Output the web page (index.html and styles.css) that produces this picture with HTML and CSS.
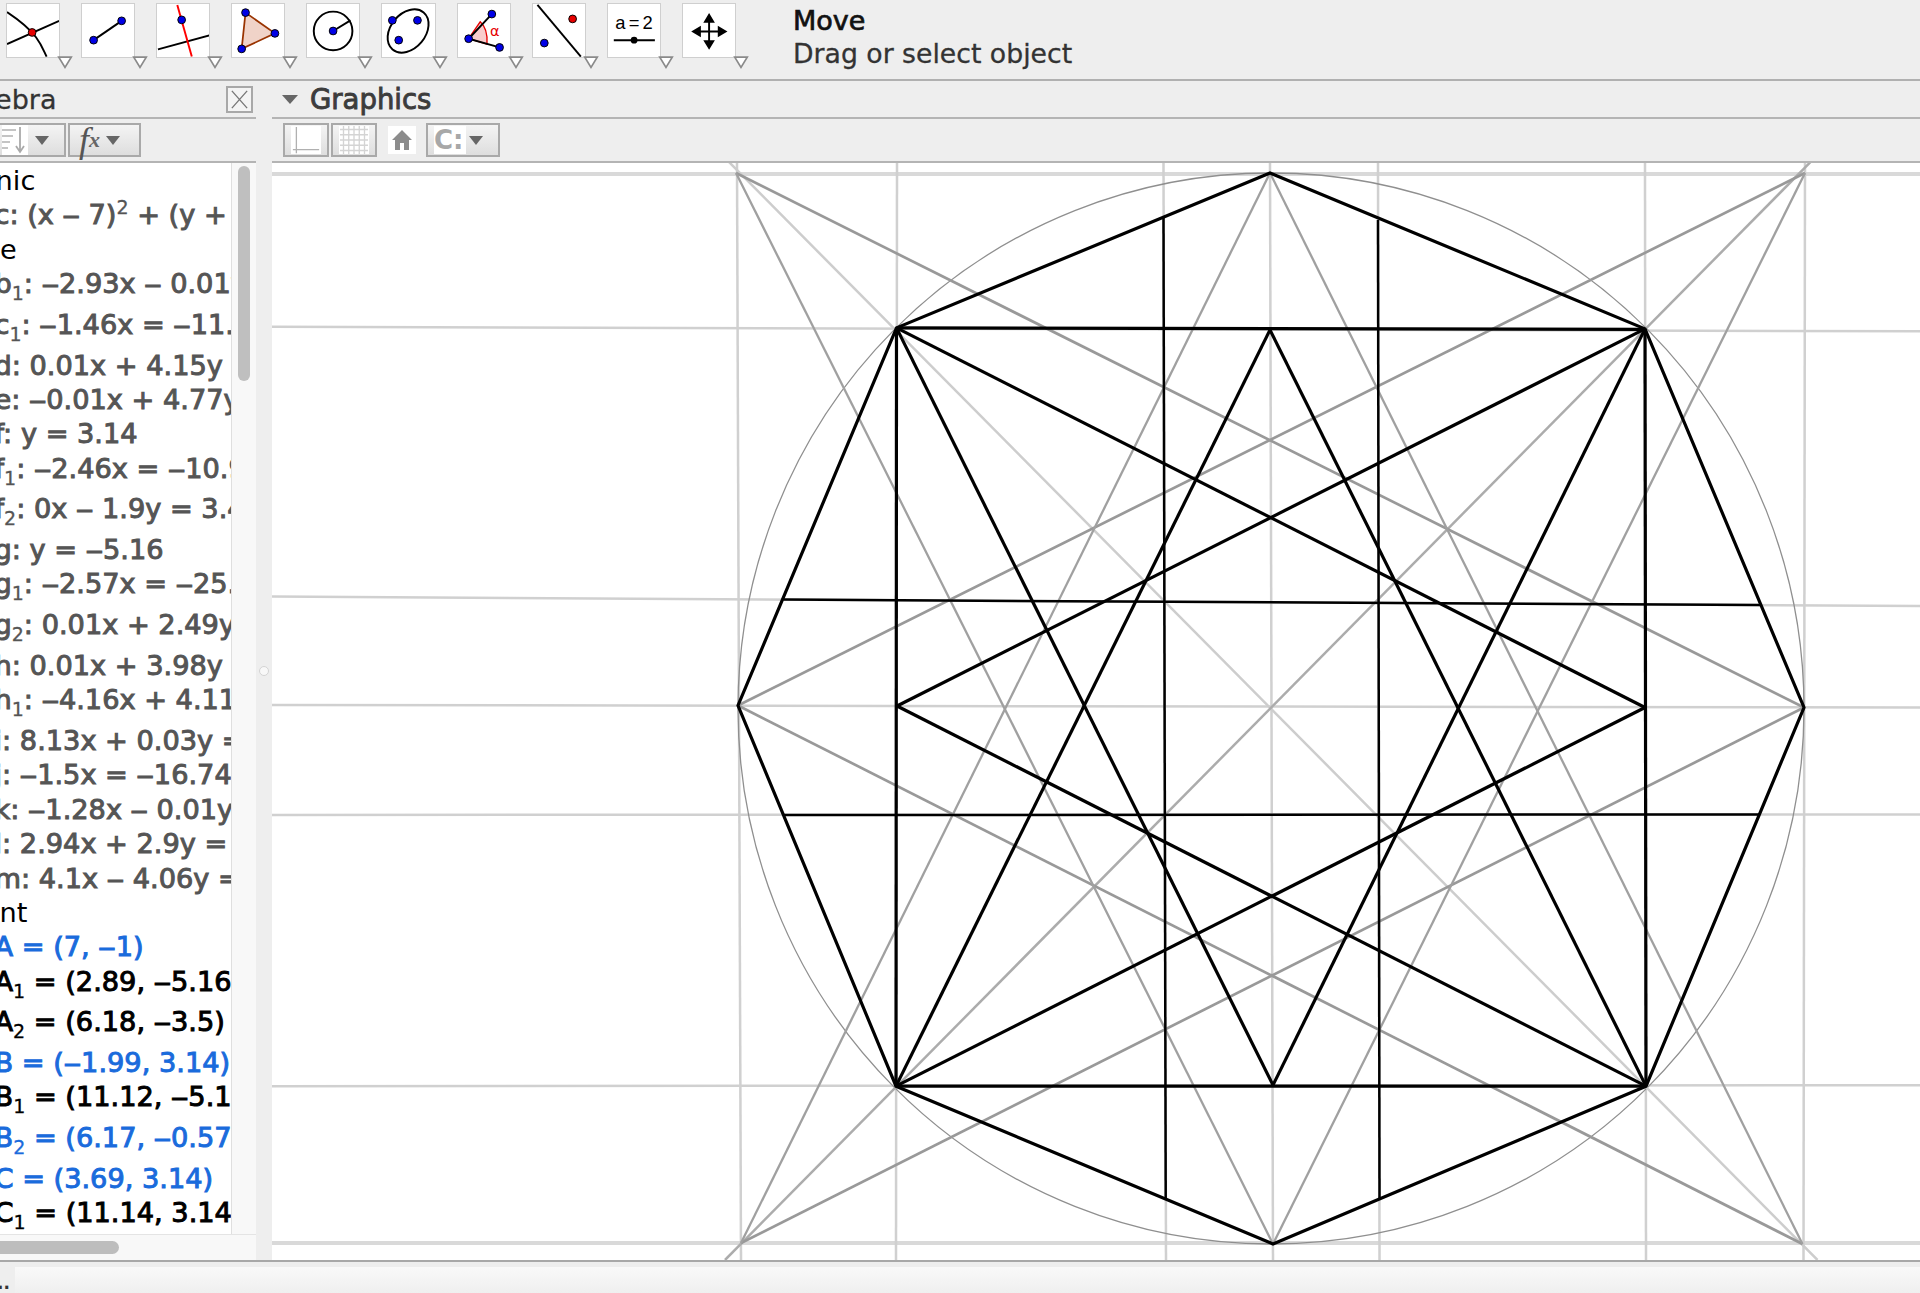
FILE: index.html
```html
<!DOCTYPE html>
<html lang="en">
<head>
<meta charset="utf-8">
<title>GeoGebra</title>
<link rel="stylesheet" href="styles.css">
</head>
<body>
<header class="toolbar">
  <div class="tools">
    <div class="tool"><svg viewBox="0 0 54 54"><path class="ic" d="M0 8C12 16 24 26 30 34S38 48 41 54"/><path class="ic" d="M0 41L54 17"/><circle class="pr" cx="26" cy="29" r="4"/></svg><svg class="corner" viewBox="0 0 14 11"><path d="M1.500 1H12.500L7 10Z"/></svg></div>
    <div class="tool"><svg viewBox="0 0 54 54"><path class="ic" d="M12 37L41 17"/><circle class="pb" cx="12" cy="37" r="4"/><circle class="pb" cx="41" cy="17" r="4"/></svg><svg class="corner" viewBox="0 0 14 11"><path d="M1.500 1H12.500L7 10Z"/></svg></div>
    <div class="tool"><svg viewBox="0 0 54 54"><path class="ic" d="M1 46.500L54 32"/><path class="ir" d="M21 0.500L36 54"/><circle class="pb" cx="25.500" cy="16" r="4"/></svg><svg class="corner" viewBox="0 0 14 11"><path d="M1.500 1H12.500L7 10Z"/></svg></div>
    <div class="tool"><svg viewBox="0 0 54 54"><path class="poly" d="M14 8.500L44.400 30L10 46Z"/><circle class="pb" cx="14" cy="8.500" r="4"/><circle class="pb" cx="44.400" cy="30" r="4"/><circle class="pb" cx="10" cy="46" r="4"/></svg><svg class="corner" viewBox="0 0 14 11"><path d="M1.500 1H12.500L7 10Z"/></svg></div>
    <div class="tool"><svg viewBox="0 0 54 54"><circle class="ic" cx="27" cy="27.500" r="20"/><path class="ic" d="M27 27.500L45 16.500"/><circle class="pb" cx="27" cy="27.500" r="4"/></svg><svg class="corner" viewBox="0 0 14 11"><path d="M1.500 1H12.500L7 10Z"/></svg></div>
    <div class="tool"><svg viewBox="0 0 54 54"><ellipse class="ic" cx="27" cy="27.500" rx="25" ry="18" transform="rotate(-50 27 27.500)"/><circle class="pb" cx="10.700" cy="16.500" r="4"/><circle class="pb" cx="36.700" cy="16.500" r="4"/><circle class="pb" cx="17.300" cy="37" r="4"/></svg><svg class="corner" viewBox="0 0 14 11"><path d="M1.500 1H12.500L7 10Z"/></svg></div>
    <div class="tool"><svg viewBox="0 0 54 54"><path class="wedge" d="M11 35.500L23 18Q31 25 30 41Z"/><path class="ic" d="M35 10L11 35.500L43 44.500"/><circle class="pb" cx="11" cy="35.500" r="4"/><circle class="pb" cx="35" cy="10" r="4"/><circle class="pb" cx="43" cy="44.500" r="4"/><text class="alpha" x="33" y="33">α</text></svg><svg class="corner" viewBox="0 0 14 11"><path d="M1.500 1H12.500L7 10Z"/></svg></div>
    <div class="tool"><svg viewBox="0 0 54 54"><path class="ic" d="M4.600 0.500L49.500 54"/><circle class="pb" cx="11.700" cy="40" r="4"/><circle class="pr" cx="41" cy="15" r="4"/></svg><svg class="corner" viewBox="0 0 14 11"><path d="M1.500 1H12.500L7 10Z"/></svg></div>
    <div class="tool"><svg viewBox="0 0 54 54"><text class="slider" x="27" y="25">a = 2</text><path class="ic" d="M6 37H48.500"/><circle class="pk" cx="27" cy="37" r="3.500"/></svg><svg class="corner" viewBox="0 0 14 11"><path d="M1.500 1H12.500L7 10Z"/></svg></div>
    <div class="tool"><svg viewBox="0 0 54 54"><path class="ic" d="M27 14V42M13 28H41"/><path class="pk" d="M27 9L33 19H21ZM27 47L33 37H21ZM8.500 28L18.500 22V34ZM46 28L36 22V34Z"/></svg><svg class="corner" viewBox="0 0 14 11"><path d="M1.500 1H12.500L7 10Z"/></svg></div>
  </div>
  <div class="help">
    <div class="help-title">Move</div>
    <div class="help-text">Drag or select object</div>
  </div>
</header>

<main class="main">
  <section class="algebra">
    <div class="phead alg-head">
      <span class="alg-title">Algebra</span>
      <button class="close"><svg viewBox="0 0 22 22"><path d="M3 2L19 20M19 2L3 20"/></svg></button>
    </div>
    <div class="ptools alg-tools">
      <div class="btn sort">
        <svg class="bicon" viewBox="0 0 26 30"><path class="sortl" d="M0 5H14M0 11H11M0 17H8M0 23H6"/><path class="sorta" d="M18 2V26M14 21L18 27L22 21"/></svg>
        <i class="caret"></i>
      </div>
      <div class="btn fx"><span class="fx-f">f</span><span class="fx-x">x</span><i class="caret"></i></div>
    </div>
    <div class="alg-body">
      <div class="list">
        <div class="row sec">Conic</div>
        <div class="row">c: (x ‒ 7)<sup>2</sup> + (y + 1)<sup>2</sup> = 80</div>
        <div class="row sec">Line</div>
        <div class="row s">b<sub>1</sub>: ‒2.93x ‒ 0.01y = 3</div>
        <div class="row s">c<sub>1</sub>: ‒1.46x = ‒11.27</div>
        <div class="row">d: 0.01x + 4.15y = 13</div>
        <div class="row">e: ‒0.01x + 4.77y = 15</div>
        <div class="row">f: y = 3.14</div>
        <div class="row s">f<sub>1</sub>: ‒2.46x = ‒10.93</div>
        <div class="row s">f<sub>2</sub>: 0x ‒ 1.9y = 3.41</div>
        <div class="row">g: y = ‒5.16</div>
        <div class="row s">g<sub>1</sub>: ‒2.57x = ‒25.81</div>
        <div class="row s">g<sub>2</sub>: 0.01x + 2.49y = 8</div>
        <div class="row">h: 0.01x + 3.98y = 4</div>
        <div class="row s">h<sub>1</sub>: ‒4.16x + 4.11y = 9</div>
        <div class="row">i: 8.13x + 0.03y = 56</div>
        <div class="row">j: ‒1.5x = ‒16.74</div>
        <div class="row">k: ‒1.28x ‒ 0.01y = 4</div>
        <div class="row">l: 2.94x + 2.9y = 18</div>
        <div class="row">m: 4.1x ‒ 4.06y = 33</div>
        <div class="row sec">Point</div>
        <div class="row free">A = (7, ‒1)</div>
        <div class="row s dep">A<sub>1</sub> = (2.89, ‒5.16)</div>
        <div class="row s dep">A<sub>2</sub> = (6.18, ‒3.5)</div>
        <div class="row free">B = (‒1.99, 3.14)</div>
        <div class="row s dep">B<sub>1</sub> = (11.12, ‒5.16)</div>
        <div class="row s free">B<sub>2</sub> = (6.17, ‒0.57)</div>
        <div class="row free">C = (3.69, 3.14)</div>
        <div class="row dep">C<sub>1</sub> = (11.14, 3.14)</div>
      </div>
      <div class="vtrack"><div class="vthumb"></div></div>
    </div>
    <div class="htrack"><div class="hthumb"></div></div>
  </section>

  <div class="divider"><i class="dot"></i></div>

  <section class="graphics">
    <div class="phead gfx-head">
      <i class="tri"></i>
      <span class="gfx-title">Graphics</span>
    </div>
    <div class="ptools gfx-tools">
      <div class="btn axes"><svg class="bicon" viewBox="0 0 32 32"><path class="axl" d="M5 1V31M1 27H31"/></svg></div>
      <div class="btn grid"><svg class="bicon" viewBox="0 0 32 32"><path class="gdl" d="M4 0V32M10 0V32M16 0V32M22 0V32M28 0V32M0 4H32M0 10H32M0 16H32M0 22H32M0 28H32"/></svg></div>
      <div class="home"><svg viewBox="0 0 28 28"><path d="M14 4L24 14H21V24H16V17H12V24H7V14H4Z"/></svg></div>
      <div class="btn cap"><span class="cap-c">C:</span><i class="caret"></i></div>
    </div>
    <svg class="canvas" viewBox="272 163 1648 1098" preserveAspectRatio="none">
      <g class="bar">
        <line x1="272" y1="174" x2="1920" y2="174"/>
        <line x1="272" y1="1244" x2="1920" y2="1244"/>
      </g>
      <g class="axis">
        <line x1="737" y1="163" x2="741" y2="1261"/>
        <line x1="897" y1="163" x2="896" y2="1261"/>
        <line x1="1163.500" y1="163" x2="1166" y2="1261"/>
        <line x1="1270" y1="163" x2="1273" y2="1261"/>
        <line x1="1378" y1="163" x2="1379.500" y2="1261"/>
        <line x1="1645" y1="163" x2="1646" y2="1261"/>
        <line x1="1805" y1="163" x2="1803.500" y2="1261"/>
        <line x1="272" y1="327" x2="1920" y2="331.500"/>
        <line x1="272" y1="597" x2="1920" y2="606.500"/>
        <line x1="272" y1="705.500" x2="1920" y2="708"/>
        <line x1="272" y1="815.500" x2="1920" y2="815"/>
        <line x1="272" y1="1087" x2="1920" y2="1086"/>
      </g>
      <ellipse class="circ" cx="1271" cy="709" rx="533" ry="536"/>
      <line class="dl" x1="729" y1="162" x2="1817.500" y2="1261"/>
      <line class="dm" x1="1810.500" y1="162" x2="725" y2="1261"/>
      <g class="gr">
        <line x1="736" y1="173" x2="1804" y2="708"/>
        <line x1="1805" y1="173" x2="738" y2="706"/>
        <line x1="741" y1="1244" x2="1804" y2="708"/>
        <line x1="1802.500" y1="1245" x2="738" y2="706"/>
      </g>
      <g class="gt">
        <line x1="736" y1="173" x2="1273" y2="1245"/>
        <line x1="1805" y1="173" x2="1273" y2="1245"/>
        <line x1="741" y1="1244" x2="1270" y2="173"/>
        <line x1="1802.500" y1="1245" x2="1270" y2="173"/>
      </g>
      <g class="kt">
        <line x1="1163.500" y1="218" x2="1165.700" y2="1199"/>
        <line x1="1378" y1="220" x2="1379.500" y2="1199"/>
        <line x1="783.500" y1="600" x2="1760" y2="605.500"/>
        <line x1="783.500" y1="815.700" x2="1759" y2="815"/>
      </g>
      <g class="k">
        <polygon points="1270,173 1645,329 1804,708 1646,1087 1273,1245 896,1087 738,706 896.500,328"/>
        <line x1="896.500" y1="328" x2="1645" y2="329.500"/>
        <line x1="896" y1="1087" x2="1646" y2="1087"/>
        <line x1="896.500" y1="328" x2="896" y2="1087"/>
        <line x1="1645" y1="329" x2="1646" y2="1087"/>
        <line x1="896.500" y1="328" x2="1645" y2="708"/>
        <line x1="1645" y1="329" x2="897" y2="706.500"/>
        <line x1="896" y1="1087" x2="1645" y2="708"/>
        <line x1="1646" y1="1087" x2="897" y2="706.500"/>
        <line x1="896.500" y1="328" x2="1273" y2="1086"/>
        <line x1="1645" y1="329" x2="1273" y2="1086"/>
        <line x1="1270" y1="330" x2="896" y2="1087"/>
        <line x1="1270" y1="330" x2="1646" y2="1087"/>
      </g>
    </svg>
  </section>
</main>

<footer class="status">
  <span class="dots">...</span>
  <div class="input"></div>
</footer>
</body>
</html>
```
FILE: styles.css
```css
* { box-sizing: border-box; }
html, body { margin: 0; padding: 0; }
body {
  width: 1920px;
  height: 1293px;
  overflow: hidden;
  background: #eeeeee;
  font-family: "DejaVu Sans", sans-serif;
  color: #000;
  display: flex;
  flex-direction: column;
}

/* top toolbar */
.toolbar {
  height: 81px;
  border-bottom: 2px solid #b0b0b0;
  display: flex;
  padding: 3px 0 0 5.500px;
  flex: none;
}
.tools { display: flex; gap: 21px; width: 731.500px; flex: none; }
.tool {
  position: relative;
  width: 54.200px;
  height: 55px;
  background: #fff;
  border: 1px solid #cfcfcf;
  flex: none;
}
.tool > svg:first-child { width: 100%; height: 100%; display: block; }
.corner {
  position: absolute;
  left: 50px;
  top: 52px;
  width: 16px;
  height: 12.500px;
  overflow: visible;
}
.corner path { fill: #fff; stroke: #8a8a8a; stroke-width: 1.500; }
.ic { fill: none; stroke: #000; stroke-width: 2; }
.ir { fill: none; stroke: #f00; stroke-width: 2; }
.pb { fill: #0000e6; stroke: #000; stroke-width: 1; }
.pr { fill: #e60000; stroke: #000; stroke-width: 1; }
.pk { fill: #000; stroke: none; }
.poly { fill: #f0d3c8; stroke: #993300; stroke-width: 1.800; }
.wedge { fill: #f9cccc; stroke: #e60000; stroke-width: 1.400; }
.alpha { fill: #e60000; font-size: 15px; font-family: "DejaVu Sans", sans-serif; }
.slider { font-size: 19px; text-anchor: middle; fill: #000; font-family: "Liberation Sans", sans-serif; word-spacing: -2px; }

.help { padding: 1px 0 0 56px; }
.help-title {
  font-size: 27px;
  line-height: 33px;
  color: #111;
  -webkit-text-stroke: 0.7px #111;
}
.help-text {
  font-size: 26.700px;
  line-height: 34px;
  color: #333;
  -webkit-text-stroke: 0.3px #333;
}

/* main split */
.main { height: 1179px; display: flex; flex: none; }
.algebra { width: 256px; display: flex; flex-direction: column; flex: none; }
.divider { width: 16px; display: flex; align-items: center; justify-content: center; flex: none; }
.dot { width: 10px; height: 10px; border-radius: 50%; background: #f8f8f8; border: 1px solid #d4d4d4; }
.graphics { flex: 1; display: flex; flex-direction: column; min-width: 0; }

.phead { height: 38px; border-bottom: 2px solid #b4b4b4; display: flex; align-items: center; flex: none; }
.ptools { height: 44px; border-bottom: 2px solid #b4b4b4; display: flex; padding-top: 4px; align-items: flex-start; flex: none; }

.alg-head { justify-content: space-between; padding-right: 3px; }
.alg-title {
  font-size: 27px;
  margin-left: -48px;
  color: #333;
  -webkit-text-stroke: 0.3px #333;
}
.close {
  width: 27px;
  height: 27px;
  padding: 1px;
  margin: 0;
  background: #f4f4f4;
  border: 2px solid #a8a8a8;
  display: block;
}
.close svg { display: block; width: 100%; height: 100%; }
.close path { fill: none; stroke: #777; stroke-width: 1.400; }

.btn {
  height: 34px;
  border: 2px solid #a9a9a9;
  background: linear-gradient(#f4f4f4, #dedede);
  display: flex;
  align-items: center;
  flex: none;
}
.bicon { display: block; }
.caret {
  width: 0;
  height: 0;
  border-left: 7px solid transparent;
  border-right: 7px solid transparent;
  border-top: 9px solid #666;
  display: block;
  flex: none;
}
.alg-tools { gap: 2px; }
.sort { width: 68px; margin-left: -2px; padding-left: 2px; gap: 7px; }
.sort .bicon { width: 26px; height: 30px; background: #fff; }
.sortl { fill: none; stroke: #c4c4c4; stroke-width: 2; }
.sorta { fill: none; stroke: #aaa; stroke-width: 1.800; }
.fx { width: 73px; padding-left: 9px; font-family: "Liberation Serif", serif; font-style: italic; color: #555; }
.fx-f { font-size: 36px; line-height: 30px; }
.fx-x { font-size: 22px; line-height: 30px; font-weight: bold; color: #666; margin-right: 6px; }

.list {
  width: 231px;
  height: 100%;
  overflow: hidden;
  background: #fff;
  white-space: nowrap;
  font-size: 27.200px;
  color: #555;
  padding-top: 1px;
}
.row {
  height: 34.400px;
  line-height: 34.400px;
  margin-left: -5.500px;
  -webkit-text-stroke: 1px currentColor;
}
.row.s { height: 40.700px; }
.row.sec { margin-left: -40px; color: #000; -webkit-text-stroke: 0; }
.row.free { color: #1a6bdc; }
.row.dep { color: #000; }
.row sub { font-size: 19px; line-height: 0; vertical-align: -7px; -webkit-text-stroke: 0.3px currentColor; }
.row sup { font-size: 19px; line-height: 0; vertical-align: 10px; -webkit-text-stroke: 0.3px currentColor; }

.alg-body { flex: 1; display: flex; min-height: 0; }
.vtrack {
  width: 25px;
  background: #f8f8f8;
  border-left: 1px solid #dfdfdf;
  padding: 3px 6px 0 6px;
}
.vthumb { height: 215px; background: #bfbfbf; border-radius: 7px; }
.htrack { height: 26px; background: #f8f8f8; border-top: 1px solid #e4e4e4; padding-top: 6px; flex: none; }
.hthumb { width: 119px; height: 13px; background: #bdbdbd; border-radius: 0 7px 7px 0; }

/* graphics */
.gfx-head { padding-left: 10px; }
.tri {
  width: 0;
  height: 0;
  border-left: 8px solid transparent;
  border-right: 8px solid transparent;
  border-top: 9px solid #666;
  display: block;
  margin-right: 12px;
}
.gfx-title {
  font-size: 27.500px;
  color: #3c3c3c;
  -webkit-text-stroke: 0.9px #3c3c3c;
}
.gfx-tools { padding-left: 11px; }
.axes, .grid { width: 46px; justify-content: center; }
.grid { margin-left: 2px; }
.axes .bicon, .grid .bicon { width: 30px; height: 28px; background: #fff; }
.axl { fill: none; stroke: #b0b0b0; stroke-width: 1.500; }
.gdl { fill: none; stroke: #d4d4d4; stroke-width: 1.500; }
.home { width: 28px; height: 28px; margin: 3px 10px 0 11px; background: #fff; flex: none; }
.home svg { display: block; width: 100%; height: 100%; }
.home path { fill: #8c8c8c; }
.cap { width: 74px; padding-left: 6px; gap: 3px; }
.cap-c {
  font-size: 26px;
  line-height: 28px;
  font-weight: bold;
  color: #a8a8a8;
  background: #fff;
  width: 32px;
  flex: none;
}

.canvas { display: block; width: 1648px; flex: 1; min-height: 0; background: #fff; }
.bar line { stroke: #d9d9d9; stroke-width: 4; }
.axis line { stroke: #d0d0d0; stroke-width: 2.500; }
.circ { fill: none; stroke: #8f8f8f; stroke-width: 1.300; }
.dl { stroke: #cdcdcd; stroke-width: 2.500; }
.dm { stroke: #acacac; stroke-width: 2.500; }
.gr line { stroke: #999; stroke-width: 2.700; }
.gt line { stroke: #a0a0a0; stroke-width: 2.300; }
.kt line { stroke: #000; stroke-width: 2.500; }
.k line, .k polygon { stroke: #000; stroke-width: 3.200; fill: none; stroke-linejoin: miter; }

/* bottom input */
.status {
  height: 33px;
  border-top: 2px solid #a8a8a8;
  display: flex;
  align-items: flex-end;
  flex: none;
}
.dots { width: 12px; font-size: 17px; line-height: 20px; color: #333; font-weight: bold; margin-left: -3px; flex: none; overflow: hidden; white-space: nowrap; }
.input { flex: 1; height: 26px; background: linear-gradient(#f9f9f9, #efefef); margin-left: 6px; }
```
